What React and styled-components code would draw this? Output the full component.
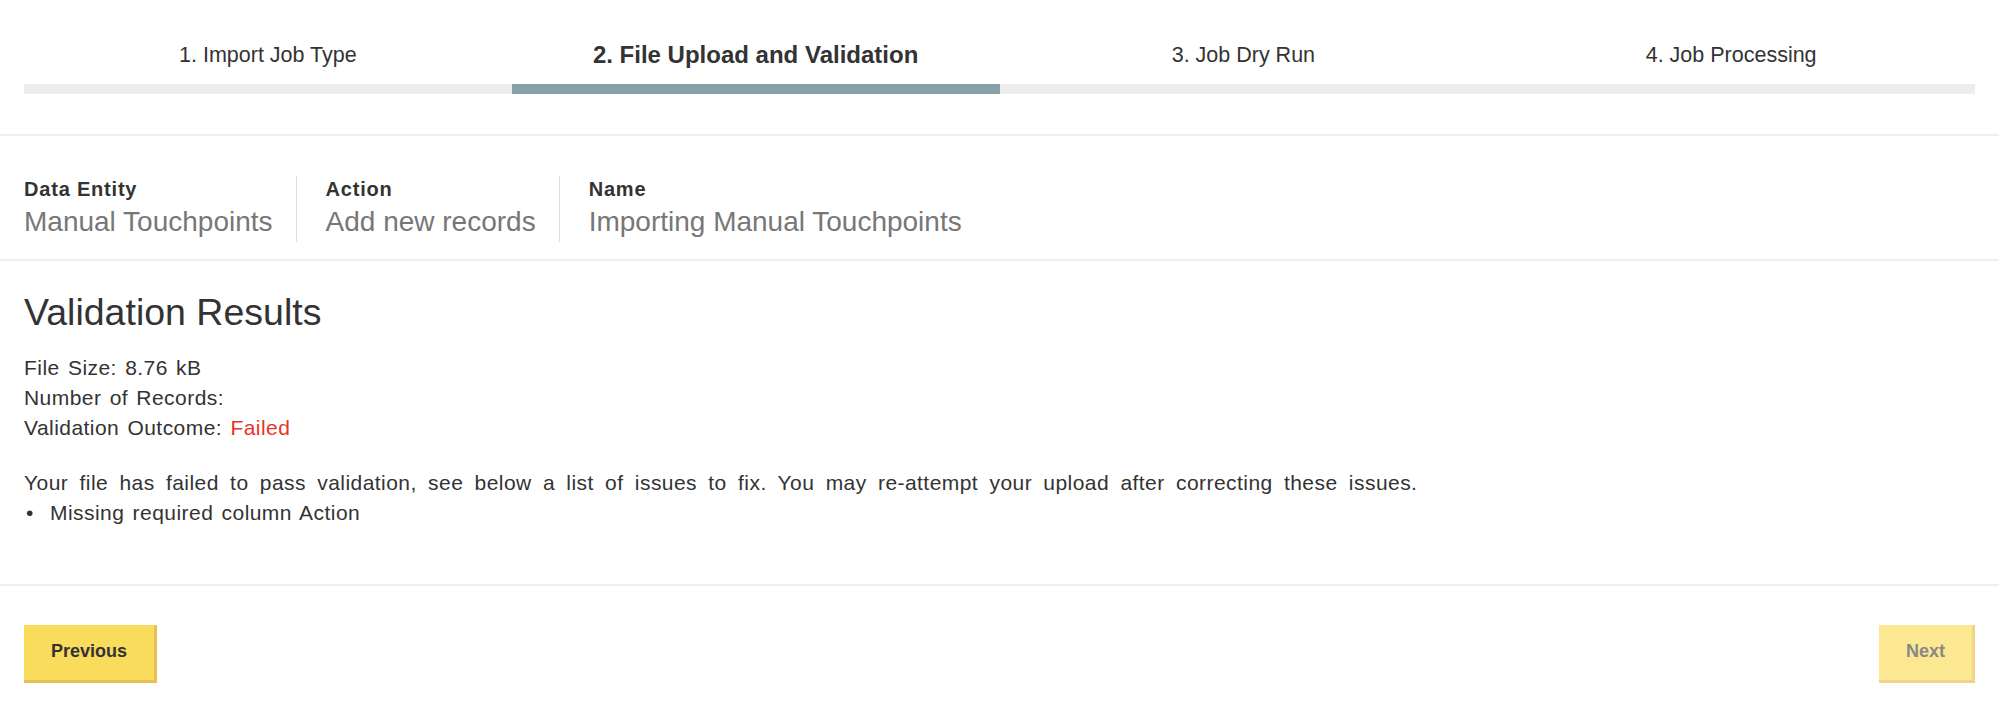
import React from "react";
import styled, { createGlobalStyle, css } from "styled-components";

const Global = createGlobalStyle`
  html, body { margin: 0; padding: 0; background: #fff; }
  body { font-family: "Liberation Sans", Arial, sans-serif; color: #333; }
  * { box-sizing: border-box; }
`;

const bodyText = css`
  font-size: 21px;
  line-height: 30px;
  letter-spacing: 0.45px;
  word-spacing: 2px;
  color: #333;
`;

const Page = styled.div`
  width: 1999px;
  min-height: 711px;
  display: flex;
  flex-direction: column;
`;

const Steps = styled.nav`
  display: grid;
  grid-template-columns: repeat(4, 1fr);
  padding: 43px 24px 40px;
  border-bottom: 2px solid #eeeeee;
`;

const Step = styled.div`
  display: flex;
  flex-direction: column;
  align-items: stretch;
`;

const StepLabel = styled.div`
  text-align: center;
  font-size: ${(p) => (p.$active ? "24px" : "21.5px")};
  font-weight: ${(p) => (p.$active ? 700 : 400)};
  line-height: 24px;
  color: #333;
  margin-bottom: 17px;
  white-space: nowrap;
`;

const StepBar = styled.div`
  height: 10px;
  background: ${(p) => (p.$active ? "#88a0a7" : "#ededed")};
`;

const Summary = styled.section`
  display: flex;
  padding: 40px 24px 17px;
  border-bottom: 2px solid #eeeeee;
`;

const SummaryItem = styled.div`
  display: flex;
  flex-direction: column;
  padding: 0 23px 0 29px;
  border-left: 1px solid #dddddd;
  &:first-child {
    padding-left: 0;
    border-left: none;
  }
`;

const SummaryLabel = styled.div`
  font-size: 20px;
  font-weight: 700;
  line-height: 26px;
  color: #333;
  letter-spacing: 0.8px;
`;

const SummaryValue = styled.div`
  font-size: 28px;
  line-height: 40px;
  color: #777;
  white-space: nowrap;
`;

const Content = styled.section`
  padding: 29px 24px 56px;
  border-bottom: 2px solid #eeeeee;
`;

const Title = styled.h2`
  margin: 0 0 19px;
  font-size: 37.5px;
  font-weight: 400;
  line-height: 44px;
  color: #333;
`;

const Line = styled.div`
  ${bodyText}
`;

const Failed = styled.span`
  color: #ec3326;
`;

const Message = styled.p`
  ${bodyText}
  margin: 25px 0 0;
  word-spacing: 5px;
`;

const Issues = styled.ul`
  margin: 0;
  padding: 0;
  list-style: none;
`;

const Issue = styled.li`
  ${bodyText}
  display: flex;
  &::before {
    content: "•";
    width: 24px;
    flex: none;
    padding-left: 2px;
  }
`;

const Footer = styled.footer`
  display: flex;
  justify-content: space-between;
  align-items: flex-start;
  padding: 39px 24px 0;
`;

const Button = styled.button`
  height: 58px;
  padding: 0 27px 3px;
  border: none;
  border-right: 3px solid ${(p) => (p.disabled ? "#f0d588" : "#e8bf54")};
  border-bottom: 3px solid ${(p) => (p.disabled ? "#f0d588" : "#e8bf54")};
  background: ${(p) => (p.disabled ? "#fbe891" : "#f9dc5c")};
  color: ${(p) => (p.disabled ? "#888" : "#333")};
  font-family: "Liberation Sans", Arial, sans-serif;
  font-size: 18px;
  font-weight: 700;
  cursor: ${(p) => (p.disabled ? "default" : "pointer")};
`;

const steps = [
  "1. Import Job Type",
  "2. File Upload and Validation",
  "3. Job Dry Run",
  "4. Job Processing",
];

const summary = [
  ["Data Entity", "Manual Touchpoints"],
  ["Action", "Add new records"],
  ["Name", "Importing Manual Touchpoints"],
];

export default function App() {
  return (
    <Page>
      <Global />
      <Steps>
        {steps.map((s, i) => (
          <Step key={s}>
            <StepLabel $active={i === 1}>{s}</StepLabel>
            <StepBar $active={i === 1} />
          </Step>
        ))}
      </Steps>
      <Summary>
        {summary.map(([l, v]) => (
          <SummaryItem key={l}>
            <SummaryLabel>{l}</SummaryLabel>
            <SummaryValue>{v}</SummaryValue>
          </SummaryItem>
        ))}
      </Summary>
      <Content>
        <Title>Validation Results</Title>
        <Line>File Size: 8.76 kB</Line>
        <Line>Number of Records:</Line>
        <Line>
          Validation Outcome: <Failed>Failed</Failed>
        </Line>
        <Message>
          Your file has failed to pass validation, see below a list of issues to fix. You may re-attempt your upload after correcting these issues.
        </Message>
        <Issues>
          <Issue>Missing required column Action</Issue>
        </Issues>
      </Content>
      <Footer>
        <Button>Previous</Button>
        <Button disabled>Next</Button>
      </Footer>
    </Page>
  );
}
